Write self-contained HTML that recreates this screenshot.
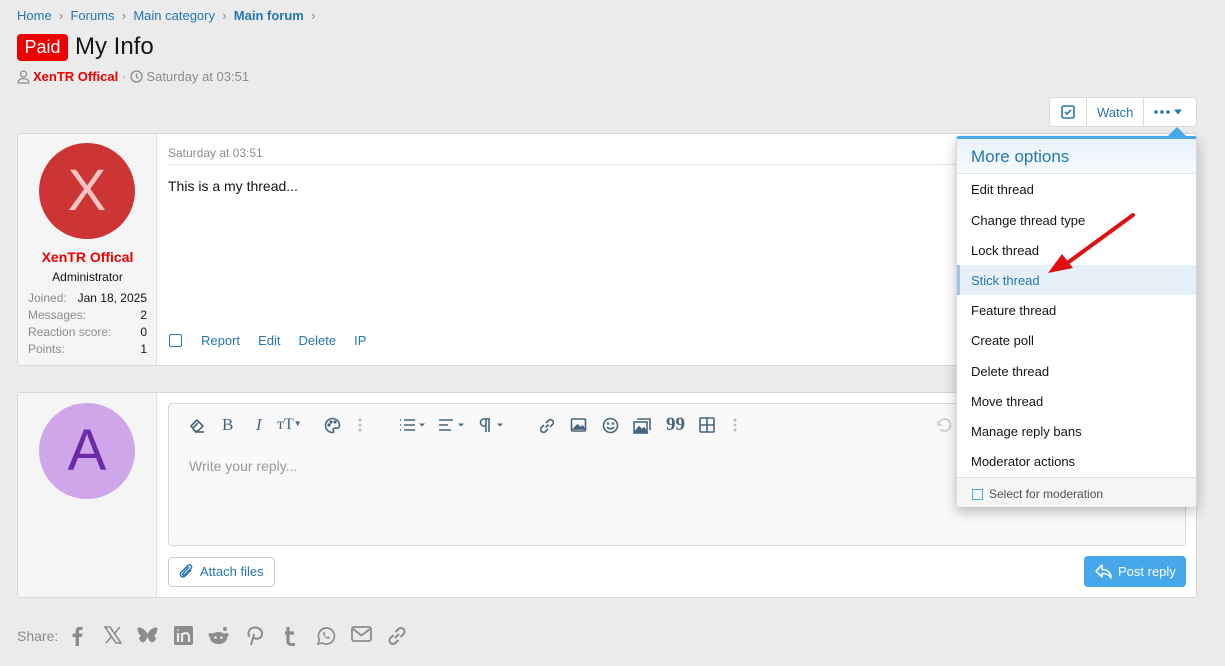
<!DOCTYPE html>
<html><head><meta charset="utf-8"><style>
*{box-sizing:border-box;margin:0;padding:0}
body{width:1225px;height:666px;background:#ebebeb;font-family:"Liberation Sans",sans-serif;font-size:13px;color:#141414;position:relative;overflow:hidden}
.a{position:absolute;white-space:nowrap}
.blue{color:#2577b1}
.menu div.it{position:absolute;left:14px;font-size:13px;color:#141414}
.tb svg{position:absolute;top:0}
.tb svg *{fill:none;stroke:#47657e;stroke-width:1.6}
.sh svg{position:absolute;top:0}
</style></head><body>
<div class="a blue" style="left:17px;top:8px;font-size:13px">Home <span style="color:#8c8c8c">&nbsp;›&nbsp;</span> Forums <span style="color:#8c8c8c">&nbsp;›&nbsp;</span> Main category <span style="color:#8c8c8c">&nbsp;›&nbsp;</span> <b>Main forum</b> <span style="color:#8c8c8c">&nbsp;›</span></div>
<div class="a" style="left:17px;top:34px;width:51px;height:27px;background:#e00;border-radius:4px;color:#fff;font-size:18px;line-height:27px;text-align:center">Paid</div>
<div class="a" style="left:75px;top:33px;font-size:24px;color:#141414">My Info</div>
<svg class="a" style="left:17px;top:70px" width="13" height="14" viewBox="0 0 13 14"><circle cx="6.5" cy="4" r="3" fill="none" stroke="#8c8c8c" stroke-width="1.2"/><path d="M1 13c0-3 2.5-4.5 5.5-4.5S12 10 12 13z" fill="none" stroke="#8c8c8c" stroke-width="1.2"/></svg>
<div class="a" style="left:33px;top:69px;font-size:13px;color:#8c8c8c"><b style="color:#e00">XenTR Offical</b> · <svg width="13" height="13" style="vertical-align:-2px"><circle cx="6.5" cy="6.5" r="5.5" fill="none" stroke="#8c8c8c" stroke-width="1.3"/><path d="M6.5 3.5v3.5l2 1.5" fill="none" stroke="#8c8c8c" stroke-width="1.3"/></svg> Saturday at 03:51</div>

<div class="a" style="left:1049px;top:97px;width:148px;height:30px;background:#fff;border:1px solid #dadada;border-radius:4px"></div>
<div class="a" style="left:1086px;top:98px;width:1px;height:28px;background:#dadada"></div>
<div class="a" style="left:1143px;top:98px;width:1px;height:28px;background:#dadada"></div>
<svg class="a" style="left:1061px;top:105px" width="14" height="14"><rect x="1" y="1" width="12" height="12" rx="1.5" fill="none" stroke="#2577b1" stroke-width="1.6"/><path d="M4 7l2 2 4-4" fill="none" stroke="#2577b1" stroke-width="1.6"/></svg>
<div class="a blue" style="left:1097px;top:105px">Watch</div>
<svg class="a" style="left:1154px;top:108px" width="30" height="8"><circle cx="2" cy="4" r="1.8" fill="#2577b1"/><circle cx="8" cy="4" r="1.8" fill="#2577b1"/><circle cx="14" cy="4" r="1.8" fill="#2577b1"/><path d="M20 1.5h8l-4 5z" fill="#2577b1"/></svg>

<div class="a" style="left:17px;top:133px;width:1180px;height:233px;background:#fff;border:1px solid #d8d8d8;border-radius:3px"></div>
<div class="a" style="left:18px;top:134px;width:139px;height:231px;background:#f5f5f5;border-right:1px solid #e0e0e0"></div>
<div class="a" style="left:39px;top:143px;width:96px;height:96px;border-radius:50%;background:#cd3535;color:#f3c4c4;font-size:58px;text-align:center;line-height:96px">X</div>
<div class="a" style="left:18px;top:249px;width:139px;text-align:center;color:#e00;font-weight:bold;font-size:14px">XenTR Offical</div>
<div class="a" style="left:18px;top:270px;width:139px;text-align:center;font-size:12px">Administrator</div>
<div class="a" style="left:28px;top:290px;width:119px;font-size:12px;line-height:17px;color:#8c8c8c">
<div>Joined:<span style="float:right;color:#141414">Jan 18, 2025</span></div>
<div>Messages:<span style="float:right;color:#141414">2</span></div>
<div>Reaction score:<span style="float:right;color:#141414">0</span></div>
<div>Points:<span style="float:right;color:#141414">1</span></div></div>
<div class="a" style="left:168px;top:146px;font-size:12px;color:#8c8c8c">Saturday at 03:51</div>
<div class="a" style="left:168px;top:164px;width:1018px;height:1px;background:#e5e5e5"></div>
<div class="a" style="left:168px;top:178px;font-size:14px">This is a my thread...</div>
<div class="a" style="left:169px;top:334px;width:13px;height:13px;border:1.5px solid #2577b1;border-radius:2px"></div>
<div class="a blue" style="left:201px;top:333px">Report &nbsp; &nbsp; Edit &nbsp; &nbsp; Delete &nbsp; &nbsp; IP</div>

<div class="a" style="left:17px;top:392px;width:1180px;height:206px;background:#fff;border:1px solid #d8d8d8;border-radius:3px"></div>
<div class="a" style="left:18px;top:393px;width:139px;height:204px;background:#f5f5f5;border-right:1px solid #e0e0e0"></div>
<div class="a" style="left:39px;top:403px;width:96px;height:96px;border-radius:50%;background:#cfa6ea;color:#6c2aa8;font-size:58px;text-align:center;line-height:96px">A</div>
<div class="a" style="left:168px;top:403px;width:1018px;height:143px;background:#f9f9f9;border:1px solid #d8d8d8;border-radius:4px"></div>
<div class="a tb" style="left:0;top:417px;width:1225px;height:18px">
<svg style="left:189px" width="16" height="16"><path d="M2 9l6-6 6 6-5 5H6z M4 11l5-5"/><path d="M6 15h9"/></svg>
<div class="a" style="left:222px;top:-2px;font-family:'Liberation Serif';font-size:17px;color:#47657e">B</div>
<div class="a" style="left:256px;top:-2px;font-family:'Liberation Serif';font-style:italic;font-size:17px;color:#47657e">I</div>
<div class="a" style="left:277px;top:-1px;font-family:'Liberation Serif';font-size:16px;color:#47657e">ᴛT<span style="font-size:8px;vertical-align:3px">▼</span></div>
<svg style="left:324px" width="17" height="17"><path d="M8.5 1.5a7 7 0 100 14c1.5 0 1.5-1.5.8-2.3-.7-.8 0-2 1.2-2H13a2.5 2.5 0 002.5-2.5c0-4-3.2-7.2-7-7.2z"/><circle cx="5" cy="8" r=".8"/><circle cx="7" cy="5" r=".8"/><circle cx="11" cy="5" r=".8"/></svg>
<svg style="left:356px" width="8" height="16"><circle cx="4" cy="3" r=".7" style="stroke:#bbb"/><circle cx="4" cy="8" r=".7" style="stroke:#bbb"/><circle cx="4" cy="13" r=".7" style="stroke:#bbb"/></svg>
<svg style="left:398px" width="30" height="16"><path d="M6 3h11M6 8h11M6 13h11M2 3h1M2 8h1M2 13h1"/><path d="M21 6.5h6l-3 3z" style="fill:#47657e;stroke:none"/></svg>
<svg style="left:438px" width="30" height="16"><path d="M1 3h14M1 8h9M1 13h12"/><path d="M20 6.5h6l-3 3z" style="fill:#47657e;stroke:none"/></svg>
<svg style="left:478px" width="30" height="16"><path d="M8 2v13M11 2v13M12 2H6a3.5 3.5 0 000 7h2"/><path d="M19 6.5h6l-3 3z" style="fill:#47657e;stroke:none"/></svg>
<svg style="left:538px" width="18" height="18"><path d="M7.5 10.5l3-3M6 8l-2.5 2.5a2.8 2.8 0 004 4L10 12M12 10l2.5-2.5a2.8 2.8 0 00-4-4L8 6"/></svg>
<svg style="left:570px" width="17" height="16"><rect x="1.5" y="2" width="14" height="12" rx="1"/><path d="M3.5 12l4-4 3 3 2-2 2 3z" style="fill:#47657e"/></svg>
<svg style="left:602px" width="17" height="17"><circle cx="8.5" cy="8.5" r="7"/><path d="M5 10c2 2.5 5 2.5 7 0"/><circle cx="6" cy="6.5" r=".5"/><circle cx="11" cy="6.5" r=".5"/></svg>
<svg style="left:633px" width="20" height="17"><rect x="1" y="5" width="13" height="11"/><path d="M4 2h13v11"/><path d="M2 15l4-5 3 3 2-2 3 4z" style="fill:#47657e"/></svg>
<div class="a" style="left:666px;top:-3px;font-size:19px;font-weight:bold;color:#47657e;font-family:'Liberation Serif'">99</div>
<svg style="left:699px" width="16" height="16"><rect x="1" y="1" width="14" height="14" rx="1"/><path d="M1 8h14M8 1v14"/></svg>
<svg style="left:731px" width="8" height="16"><circle cx="4" cy="3" r=".7" style="stroke:#bbb"/><circle cx="4" cy="8" r=".7" style="stroke:#bbb"/><circle cx="4" cy="13" r=".7" style="stroke:#bbb"/></svg>
<svg style="left:935px" width="17" height="17"><path d="M3 4v4h4" style="stroke:#ccc"/><path d="M3.5 8a6 6 0 112 4.5" style="stroke:#ccc"/></svg>
</div>
<div class="a" style="left:189px;top:458px;font-size:14px;color:#999">Write your reply...</div>
<div class="a blue" style="left:168px;top:557px;width:107px;height:30px;background:#fff;border:1px solid #d0d0d0;border-radius:4px;line-height:28px;padding-left:31px">Attach files</div>
<svg class="a" style="left:179px;top:563px" width="16" height="17"><path d="M12 7l-6 6a2.5 2.5 0 01-4-3.5l7-7a2 2 0 013 3l-6.5 6.5a1 1 0 01-1.5-1.5L10 4" fill="none" stroke="#2577b1" stroke-width="1.5"/></svg>
<div class="a" style="left:1084px;top:556px;width:102px;height:31px;background:#47a7eb;border-radius:4px;color:#fff;line-height:31px;padding-left:34px;font-size:13px">Post reply</div>
<svg class="a" style="left:1094px;top:563px" width="20" height="17"><path d="M8 2L2 8l6 6V10.5c4 0 7 1 9 4.5 0-5-3-8.5-9-8.5z" fill="none" stroke="#fff" stroke-width="1.5" stroke-linejoin="round"/></svg>

<div class="a" style="left:17px;top:628px;font-size:14px;color:#8c8c8c">Share:</div>
<div class="a sh" style="left:0;top:626px;width:500px;height:22px">
<svg style="left:71px" width="12" height="20"><path d="M8 20V11h3l.5-3.5H8V5.5C8 4.5 8.3 4 9.6 4H11.6V1C11 .9 10 .8 9 .8 6.3.8 4.6 2.4 4.6 5.3V7.5H1.6V11h3v9z" fill="#8c8c8c"/></svg>
<svg style="left:104px" width="18" height="18"><path d="M1 1h5l11 16h-5z M2 17L8 10M10 8l6-7" fill="none" stroke="#8c8c8c" stroke-width="1.6"/></svg>
<svg style="left:137px" width="21" height="18"><path d="M10.5 8C9 4.5 4 .5 1.5 1.5S2 9 4 10c-2 1-3 3 0 5.5s5-1 6.5-4.5c1.5 3.5 3.5 7 6.5 4.5s2-4.5 0-5.5c2-1 5-7.5 2.5-8.5S12 4.5 10.5 8z" fill="#8c8c8c"/></svg>
<svg style="left:174px" width="19" height="19"><rect x="0" y="0" width="19" height="19" rx="2" fill="#8c8c8c"/><path d="M4 7v9M4 3.5v1M8 16V7M8 10.5c0-2 1.5-3.5 3.5-3.5S15 8.5 15 10.5V16" stroke="#ebebeb" stroke-width="2.2" fill="none"/></svg>
<svg style="left:208px" width="21" height="19"><ellipse cx="10.5" cy="12" rx="8.5" ry="6" fill="#8c8c8c"/><circle cx="17" cy="3" r="2" fill="#8c8c8c"/><circle cx="2.5" cy="9" r="2" fill="#8c8c8c"/><circle cx="18.5" cy="9" r="2" fill="#8c8c8c"/><circle cx="7.5" cy="11.5" r="1.3" fill="#ebebeb"/><circle cx="13.5" cy="11.5" r="1.3" fill="#ebebeb"/></svg>
<svg style="left:247px" width="16" height="20"><path d="M4 19l3-11M7 11.5c1 2 8 2 8-4C15 4 12 1.5 8 1.5S1.5 4 1.5 7.5c0 2 1 3 1.5 3" fill="none" stroke="#8c8c8c" stroke-width="2"/></svg>
<svg style="left:283px" width="14" height="20"><path d="M5 1v14c0 3 2 4 7 3.5M2 7h9" fill="none" stroke="#8c8c8c" stroke-width="3.2"/></svg>
<svg style="left:316px" width="20" height="20"><path d="M2 18l1.3-4.3A8 8 0 116.5 17z" fill="none" stroke="#8c8c8c" stroke-width="1.7"/><path d="M7 6.5c0 3 2.5 6 6 6.5l1-1.5-2-1-1 .8c-1-.5-2-1.5-2.5-2.5l.8-1-1-2z" fill="#8c8c8c"/></svg>
<svg style="left:351px" width="21" height="17"><rect x="1" y="1" width="19" height="14" rx="2" fill="none" stroke="#8c8c8c" stroke-width="1.8"/><path d="M1.5 2.5l9 7 9-7" fill="none" stroke="#8c8c8c" stroke-width="1.8"/></svg>
<svg style="left:387px" width="20" height="20"><path d="M8 12l4-4M6.5 9l-3 3a3.5 3.5 0 005 5l3-3M13.5 11l3-3a3.5 3.5 0 00-5-5l-3 3" fill="none" stroke="#8c8c8c" stroke-width="2"/></svg>
</div>

<div class="a menu" style="left:956px;top:136px;width:241px;height:371px;background:#fff;border:1px solid #d8d8d8;border-top:3px solid #47a7eb;border-radius:3px;box-shadow:0 5px 12px rgba(0,0,0,.25)">
<div style="position:absolute;left:0;top:0;width:239px;height:35px;background:linear-gradient(#e8f2fb,#f6fafd);border-bottom:1px solid #dde6ee"></div>
<div class="it" style="top:8px;font-size:17px;color:#2577b1">More options</div>
<div class="it" style="top:43px">Edit thread</div>
<div class="it" style="top:74px">Change thread type</div>
<div class="it" style="top:104px">Lock thread</div>
<div style="position:absolute;left:0;top:126px;width:239px;height:30px;background:#e6f0f8;border-left:3px solid #9fc6e8"></div>
<div class="it" style="top:134px;color:#2577b1">Stick thread</div>
<div class="it" style="top:164px">Feature thread</div>
<div class="it" style="top:194px">Create poll</div>
<div class="it" style="top:225px">Delete thread</div>
<div class="it" style="top:255px">Move thread</div>
<div class="it" style="top:285px">Manage reply bans</div>
<div class="it" style="top:315px">Moderator actions</div>
<div style="position:absolute;left:0;top:338px;width:239px;height:30px;background:#f5f5f5;border-top:1px solid #e0e0e0"></div>
<div style="position:absolute;left:15px;top:350px;width:11px;height:11px;border:1.3px solid #47a7eb"></div>
<div class="it" style="left:32px;top:348px;font-size:12px;color:#505050">Select for moderation</div>
</div>
<div class="a" style="left:1168px;top:127px;width:0;height:0;border:9px solid transparent;border-bottom-color:#47a7eb;border-top:0"></div>
<svg class="a" style="left:1040px;top:210px" width="100" height="70"><path d="M93 5L26 54" stroke="#e01010" stroke-width="4" stroke-linecap="round"/><path d="M8 63L22 44 33 58z" fill="#e01010"/></svg>
</body></html>
